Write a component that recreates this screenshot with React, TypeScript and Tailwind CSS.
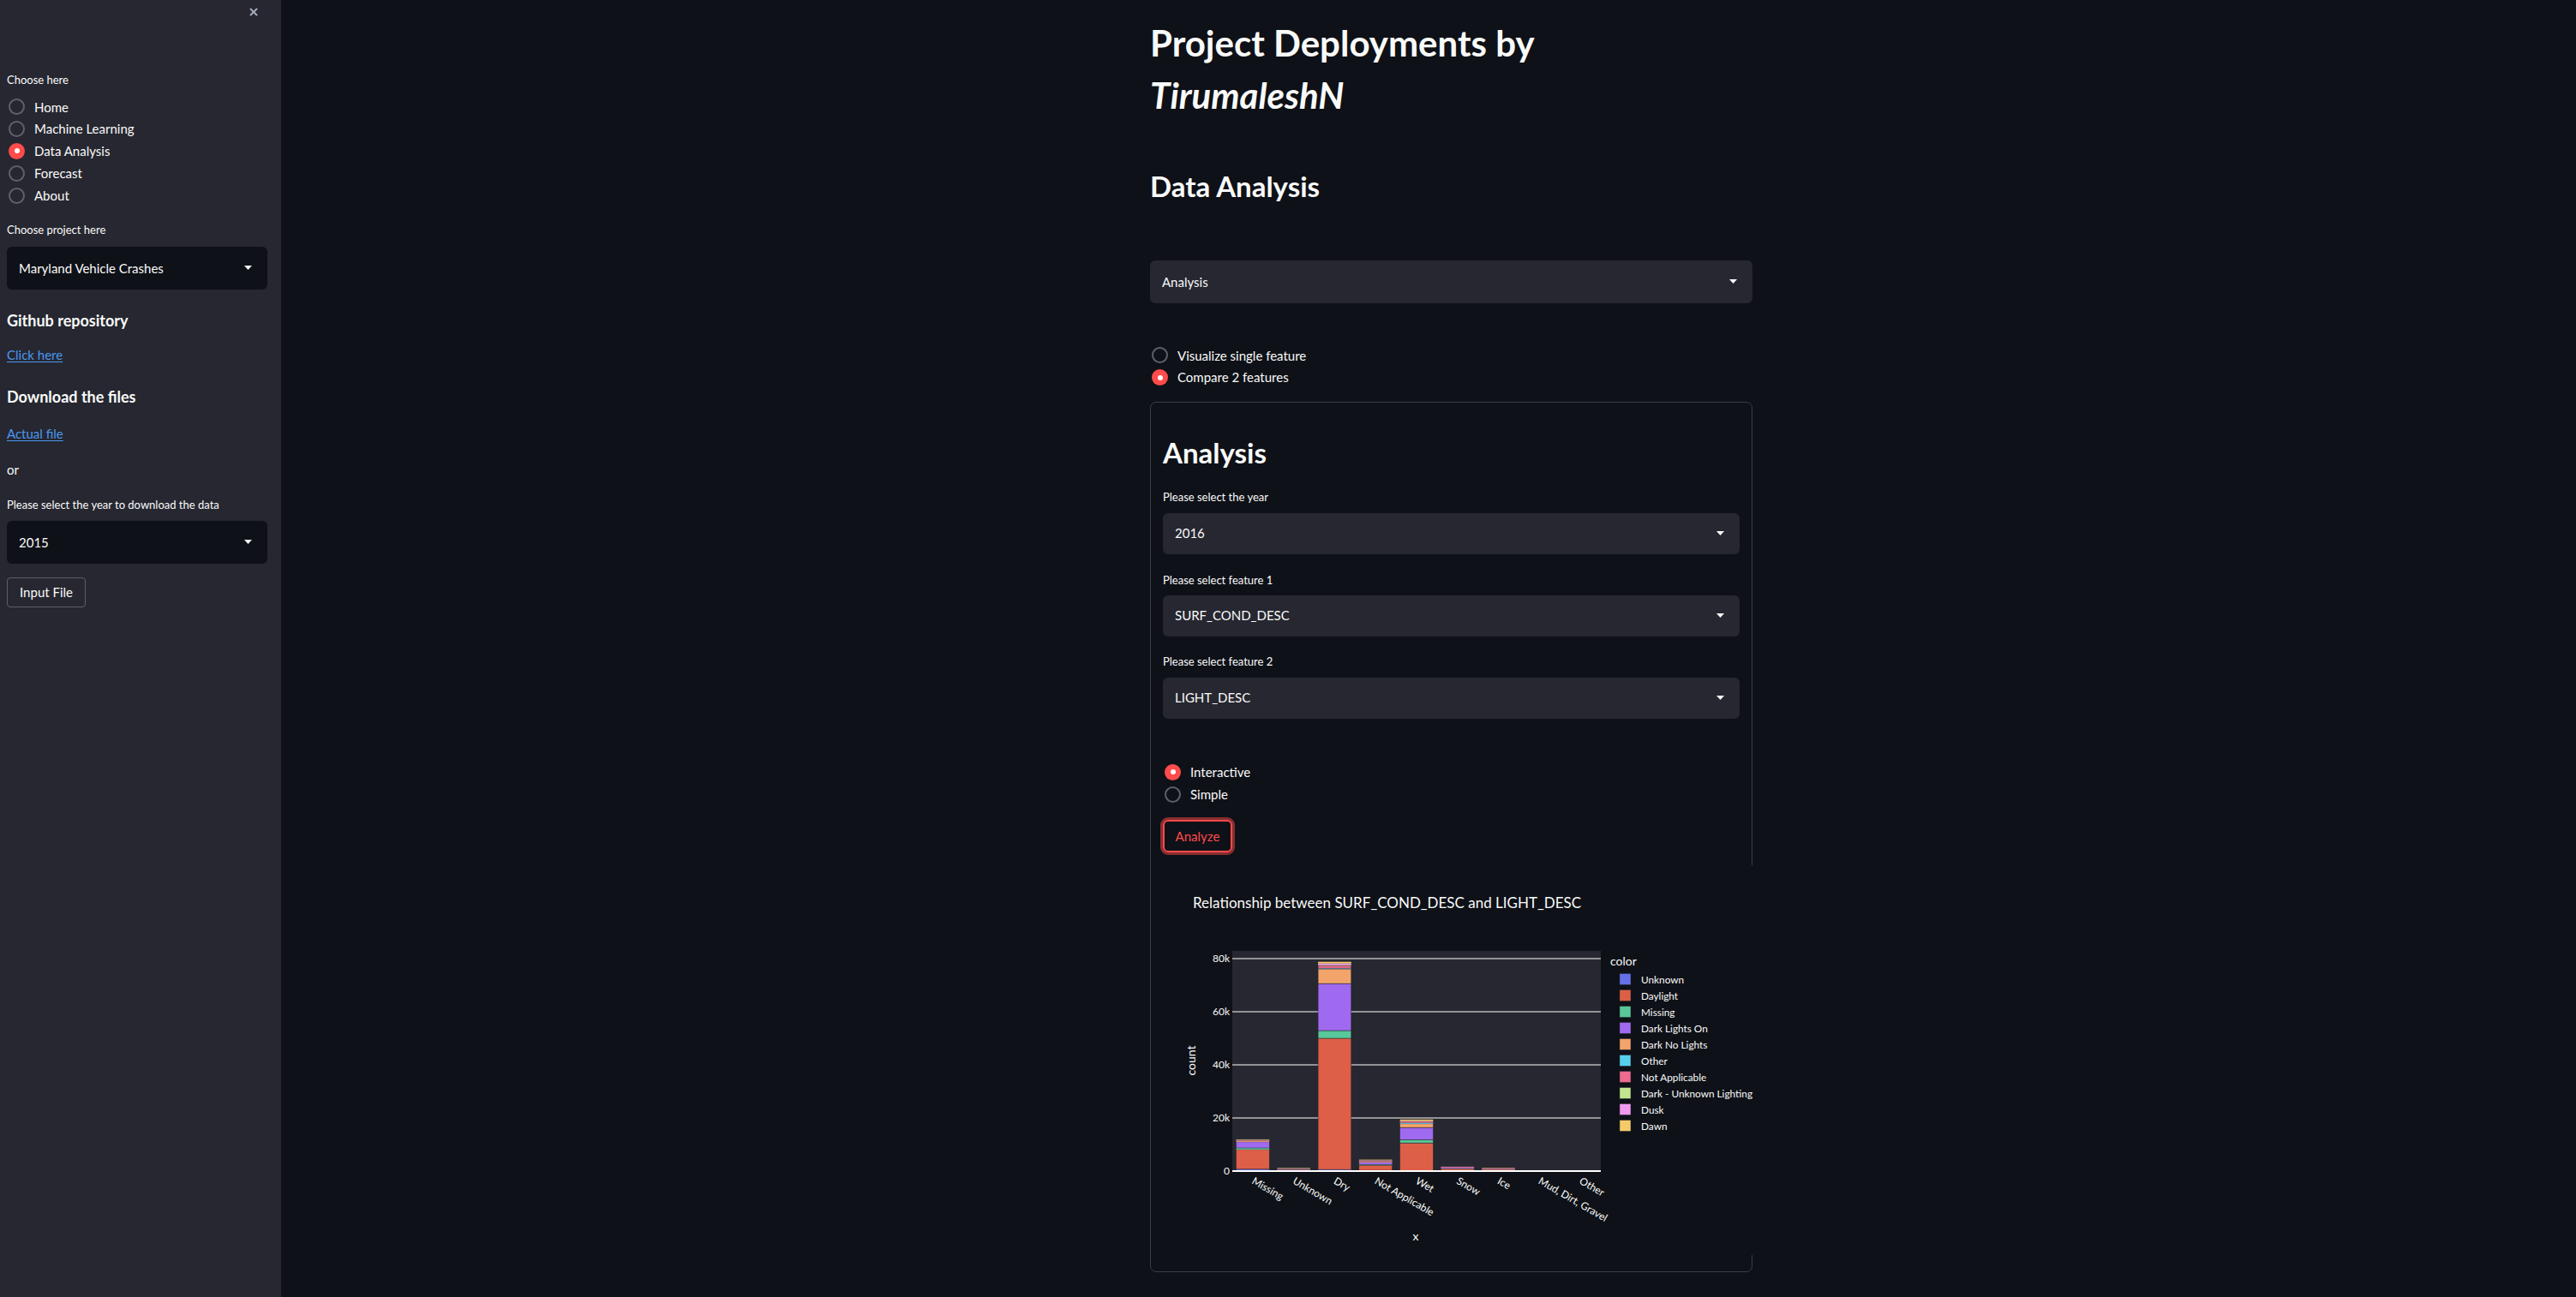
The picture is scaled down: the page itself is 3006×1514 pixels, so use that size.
import { X } from "lucide-react";

const COLORS = ["#6370e8", "#de5f47", "#58c79a", "#a06af0", "#f2a46a", "#57d0ec", "#ec6b8e", "#c0e58e", "#f19af0", "#f5cb6a"];
const SERIES = ["Unknown", "Daylight", "Missing", "Dark Lights On", "Dark No Lights", "Other", "Not Applicable", "Dark - Unknown Lighting", "Dusk", "Dawn"];

const BARS: { label: string; v: number[] }[] = [
  { label: "Missing", v: [0.7, 7.4, 0.6, 2.3, 0.4, 0.05, 0.2, 0.05, 0.1, 0.15] },
  { label: "Unknown", v: [0.5, 0.2, 0.05, 0.1, 0.05, 0, 0.05, 0.05, 0, 0.15] },
  { label: "Dry", v: [0.6, 49.4, 2.9, 17.7, 5.5, 0.3, 1.0, 0.2, 0.6, 0.6] },
  { label: "Not Applicable", v: [0.3, 1.9, 0.3, 0.8, 0.3, 0.1, 0.3, 0.05, 0.1, 0.15] },
  { label: "Wet", v: [0.2, 10.4, 1.2, 4.6, 1.4, 0.4, 0.5, 0.1, 0.1, 0.5] },
  { label: "Snow", v: [0.1, 0.8, 0.05, 0.3, 0.05, 0, 0.25, 0, 0.05, 0.05] },
  { label: "Ice", v: [0.1, 0.5, 0.05, 0.2, 0.05, 0, 0.15, 0, 0, 0.15] },
  { label: "Mud, Dirt, Gravel", v: [0, 0.05, 0, 0.05, 0, 0, 0, 0, 0.2, 0] },
  { label: "Other", v: [0, 0.03, 0, 0.03, 0, 0, 0, 0, 0, 0.15] },
];

function Caret() {
  return (
    <svg width="9" height="6" viewBox="0 0 9 6" className="shrink-0">
      <path d="M0 0h9L4.5 5z" fill="#fafafa" />
    </svg>
  );
}

function Select({ value, dark, tall = true }: { value: string; dark?: boolean; tall?: boolean }) {
  return (
    <div
      className={`${tall ? "h-[50px]" : "h-[48px]"} rounded-[6px] flex items-center justify-between pl-[14px] pr-[18px] ${
        dark ? "bg-[#0e1117]" : "bg-[#262730]"
      }`}
    >
      <span className="text-[15px] text-[#fafafa]">{value}</span>
      <Caret />
    </div>
  );
}

function Radio({ label, checked }: { label: string; checked?: boolean }) {
  return (
    <div className="h-[25.8px] flex items-center gap-[11px]">
      {checked ? (
        <span className="w-[19px] h-[19px] rounded-full bg-[#ff4b4b] flex items-center justify-center">
          <span className="w-[6px] h-[6px] rounded-full bg-white" />
        </span>
      ) : (
        <span className="w-[19px] h-[19px] rounded-full border-2 border-[#5f6068]" />
      )}
      <span className="text-[15px] text-[#fafafa]">{label}</span>
    </div>
  );
}

function Chart() {
  const x0 = 81, x1 = 511, yTop = 100, yZero = 357;
  const pxPerK = 3.1;
  const slot = (x1 - x0) / BARS.length;
  const bw = 38.7;
  const ticks = [0, 20, 40, 60, 80];
  return (
    <svg width="689" height="455" className="block overflow-visible font-['Lato',sans-serif]">
      <text x="35" y="50" fontSize="17" fill="#fafafa">Relationship between SURF_COND_DESC and LIGHT_DESC</text>
      <rect x={x0} y={yTop} width={x1 - x0} height={yZero - yTop} fill="#262730" />
      {ticks.slice(1).map((t) => (
        <line key={t} x1={x0} x2={x1} y1={yZero - t * pxPerK} y2={yZero - t * pxPerK} stroke="#ffffff" strokeWidth="1" />
      ))}
      {BARS.map((b, i) => {
        const left = x0 + i * slot + (slot - bw) / 2;
        let acc = 0;
        return (
          <g key={b.label}>
            {b.v.map((v, j) => {
              if (v <= 0) return null;
              const h = v * pxPerK;
              const y = yZero - (acc + v) * pxPerK;
              acc += v;
              return (
                <rect
                  key={j}
                  x={left}
                  y={y}
                  width={bw}
                  height={h}
                  fill={COLORS[j]}
                  stroke={h > 2 ? "#262730" : "none"}
                  strokeWidth="0.5"
                />
              );
            })}
          </g>
        );
      })}
      <line x1={x0} x2={x1} y1={yZero} y2={yZero} stroke="#ffffff" strokeWidth="2" />
      {ticks.map((t) => (
        <text key={t} x={x0 - 3} y={yZero - t * pxPerK + 4} fontSize="12" fill="#fafafa" textAnchor="end">
          {t === 0 ? "0" : `${t}k`}
        </text>
      ))}
      <text x="38" y="228" fontSize="14" fill="#fafafa" textAnchor="middle" transform="rotate(-90 38 228)">count</text>
      {BARS.map((b, i) => {
        const cx = x0 + i * slot + slot / 2 - 2;
        const cy = yZero + 14;
        return (
          <text key={b.label} x={cx} y={cy} fontSize="12" fill="#fafafa" transform={`rotate(30 ${cx} ${cy})`}>
            {b.label}
          </text>
        );
      })}
      <text x="295" y="438" fontSize="14" fill="#fafafa" textAnchor="middle">x</text>
      <text x="522" y="117" fontSize="14" fill="#fafafa">color</text>
      {SERIES.map((s, i) => (
        <g key={s}>
          <rect x="533" y={133 + i * 19 - 6.5} width="13" height="13" fill={COLORS[i]} stroke="#262730" strokeWidth="0.5" />
          <text x="558" y={133 + i * 19 + 4.5} fontSize="11.8" fill="#fafafa">{s}</text>
        </g>
      ))}
    </svg>
  );
}

export default function App() {
  return (
    <div className="min-h-screen w-full flex bg-[#0e1117] font-['Lato',sans-serif] text-[#fafafa]">
      {/* Sidebar */}
      <aside className="w-[328px] shrink-0 min-h-screen bg-[#262730] px-[8px]">
        <div className="h-[28px] flex items-center justify-end pr-[17px]">
          <X className="w-[14px] h-[14px] text-[#a3a8b8]" strokeWidth={3.5} />
        </div>
        <p className="mt-[55px] leading-[20px] text-[13px]">Choose here</p>
        <div className="mt-[9px] pl-[2px]">
          <Radio label="Home" />
          <Radio label="Machine Learning" />
          <Radio label="Data Analysis" checked />
          <Radio label="Forecast" />
          <Radio label="About" />
        </div>
        <p className="mt-[17px] leading-[20px] text-[13px]">Choose project here</p>
        <div className="mt-[10px] w-[304px]">
          <Select value="Maryland Vehicle Crashes" dark />
        </div>
        <h3 className="mt-[23px] leading-[26px] text-[18px] font-bold">Github repository</h3>
        <a className="block mt-[16px] leading-[22px] text-[15px] text-[#4a98f0] underline underline-offset-2">Click here</a>
        <h3 className="mt-[25px] leading-[26px] text-[18px] font-bold">Download the files</h3>
        <a className="block mt-[19px] leading-[22px] text-[15px] text-[#4a98f0] underline underline-offset-2">Actual file</a>
        <p className="mt-[20px] leading-[22px] text-[15px]">or</p>
        <p className="mt-[20px] leading-[20px] text-[13px]">Please select the year to download the data</p>
        <div className="mt-[9px] w-[304px]">
          <Select value="2015" dark />
        </div>
        <button className="mt-[16px] h-[35px] w-[92px] rounded-[4px] border border-[#5d5f67] text-[15px] text-[#fafafa]">
          Input File
        </button>
      </aside>

      {/* Main */}
      <main className="flex-1 min-w-0">
        <div className="ml-[1014px] w-[703px] pt-[20px] pb-[30px]">
          <h1 className="text-[42px] leading-[61px] font-bold">
            Project Deployments by
            <br />
            <em className="italic">TirumaleshN</em>
          </h1>
          <h2 className="mt-[53px] text-[33px] leading-[44px] font-bold">Data Analysis</h2>
          <div className="mt-[65px]">
            <Select value="Analysis" />
          </div>
          <div className="mt-[48px] pl-[2px]">
            <Radio label="Visualize single feature" />
            <Radio label="Compare 2 features" checked />
          </div>

          <div className="mt-[15px] border border-[#3b3d45] rounded-[7px] px-[14px] pt-[36px] pb-[19px]">
            <h2 className="text-[33px] leading-[44px] font-bold">Analysis</h2>
            <p className="mt-[20px] leading-[20px] text-[13px]">Please select the year</p>
            <div className="mt-[9px]">
              <Select value="2016" tall={false} />
            </div>
            <p className="mt-[20px] leading-[20px] text-[13px]">Please select feature 1</p>
            <div className="mt-[8px]">
              <Select value="SURF_COND_DESC" tall={false} />
            </div>
            <p className="mt-[19px] leading-[20px] text-[13px]">Please select feature 2</p>
            <div className="mt-[9px]">
              <Select value="LIGHT_DESC" tall={false} />
            </div>
            <div className="mt-[50px] pl-[2px]">
              <Radio label="Interactive" checked />
              <Radio label="Simple" />
            </div>
            <button className="mt-[17px] h-[38px] w-[81px] rounded-[6px] border-2 border-[#ff4b4b] ring-[3px] ring-[#ff4b4b]/50 text-[15px] text-[#ff4b4b]">
              Analyze
            </button>
            <div className="relative mt-[15px] -mr-[16px] h-[455px] bg-[#0e1117]">
              <Chart />
            </div>
          </div>
        </div>
      </main>
    </div>
  );
}
